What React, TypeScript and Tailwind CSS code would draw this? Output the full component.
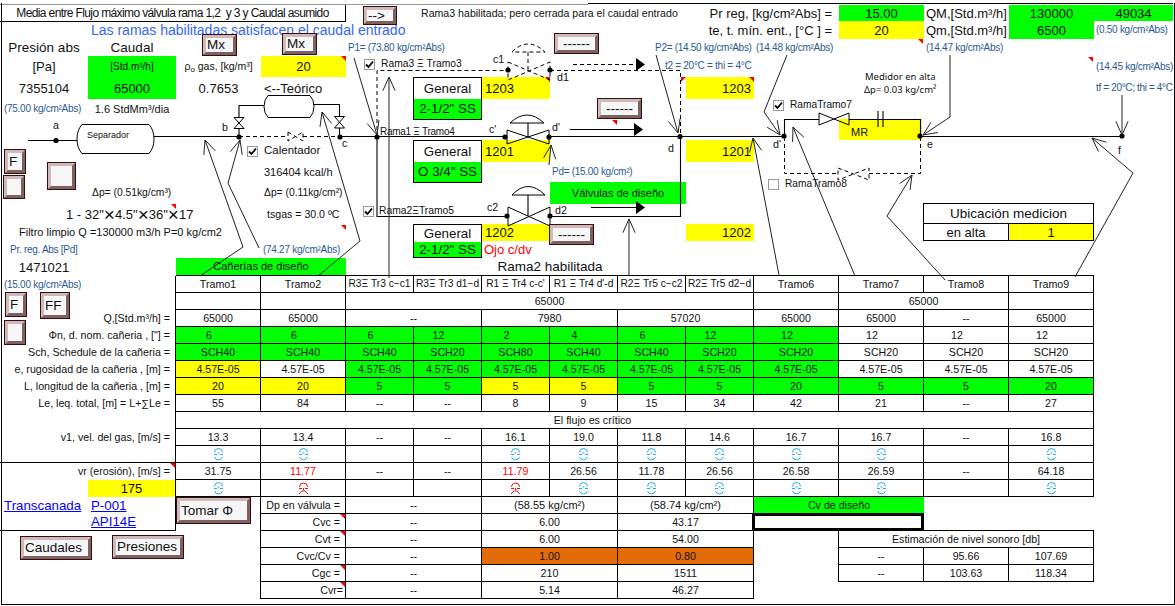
import type { ReactNode } from "react"

const G = "bg-[#00ff00]"
const Y = "bg-[#ffff00]"
const O = "bg-[#e36c09]"
const kg = "text-[#2a5a94] text-[10px] tracking-[-0.28px]"
const top = "flex items-center whitespace-nowrap"
const t13 = "text-[13px]"

function Corner() {
  return <i className="absolute top-0 right-0 border-t-[5px] border-l-[5px] border-t-[#ff0000] border-l-transparent" />
}

function Btn({ className, children, center }: { className: string; children?: ReactNode; center?: boolean }) {
  return (
    <div className={"absolute border border-[#3c0c0c] " + className}>
      <div
        className={
          "h-full border-[3px] border-t-[#cdbaba] border-l-[#cdbaba] border-b-[#7d6262] border-r-[#7d6262] bg-[#f6f6f6] flex items-center text-[13.5px] leading-none font-normal text-[#111] whitespace-nowrap " +
          (center ? "justify-center" : "justify-start pl-px")
        }
      >
        {children}
      </div>
    </div>
  )
}

function Check({ on = true }: { on?: boolean }) {
  return (
    <span className="inline-flex w-[11px] h-[11px] border border-[#999] bg-white shrink-0">
      {on && (
        <svg viewBox="0 0 9 9" className="w-[9px] h-[9px]">
          <path d="M1 4.5 L3.5 7 L8 1.5" fill="none" stroke="#000" strokeWidth="1.8" />
        </svg>
      )}
    </span>
  )
}

// the little face the sheet prints under the velocities
function Face({ sad = false }: { sad?: boolean }) {
  const c = sad ? "#f01010" : "#2aa8ee"
  return (
    <svg width="11" height="13" viewBox="0 0 11 13" fill="none" stroke={c} strokeWidth="1">
      {sad ? (
        <>
          <path d="M1.5 5 A4 4 0 0 1 9.5 5" />
          <path d="M1 6.5 H4 M7 6.5 H10" />
          <path d="M5.5 6 V8 M1 12 L4 9 H7 L10 12" />
        </>
      ) : (
        <>
          <path d="M1.5 4.5 A4 4 0 0 1 9.5 4.5" />
          <path d="M1 6.5 H4 M7 6.5 H10 M4.5 5 H6.5" />
          <path d="M1.5 9 A4.2 4.2 0 0 0 9.5 9" />
        </>
      )}
    </svg>
  )
}

type Cell = { t?: ReactNode; c?: string; corner?: boolean }
const td = (t: ReactNode, c = ""): Cell => ({ t, c: "border-r border-b border-black justify-center " + c })
const lab = (t: ReactNode, c = "", corner = false): Cell => ({
  t,
  c: "col-span-2 justify-end pr-[5px] border-r border-black " + c,
  corner,
})
const many = (vals: ReactNode[], bgs: string[] = [], c = "") => vals.map((v, i) => td(v, (bgs[i] || "") + " " + c))
const S = <Face />
const X = <Face sad />
const red = (t: string) => <span className="text-[#ff0000]">{t}</span>
const link = (t: string) => <a className="text-[13.3px] text-[#0000ff] underline">{t}</a>
const dl = (t: ReactNode, corner = false): Cell => ({
  t,
  c: "border-r border-b border-black justify-end pr-[5px]",
  corner,
})
const sp2 = "col-span-2"

const rows: Cell[][] = [
  [
    { t: "1471021", c: "justify-center " + t13 },
    {},
    { t: "Cañerías de diseño", c: "col-span-2 justify-center border-b border-black bg-[#00ff00] text-[11px]" },
    { c: "border-b border-black" },
    { c: "border-b border-black" },
    { t: "Rama2 habilitada", c: "col-span-2 justify-center border-b border-black text-[13.5px]" },
    { c: "border-b border-black" },
    { c: "border-b border-black" },
    { c: "border-b border-black" },
    { c: "border-b border-black" },
    { c: "border-b border-black" },
    { c: "border-b border-black" },
  ],
  [
    { t: "(15.00 kg/cm²Abs)", c: "col-span-2 pl-[4px] border-r border-black " + kg },
    td("Tramo1"),
    td("Tramo2"),
    ...many(
      ["R3Ξ Tr3 c−c1", "R3Ξ Tr3 d1−d", "R1 Ξ Tr4 c-c'", "R1 Ξ Tr4 d'-d", "R2Ξ Tr5 c−c2", "R2Ξ Tr5 d2−d"],
      [],
      "text-[10.2px]"
    ),
    td("Tramo6"),
    td("Tramo7"),
    td("Tramo8"),
    td("Tramo9"),
  ],
  [lab(""), td(""), td(""), td("65000", "col-span-6"), td(""), td("65000", sp2), td("")],
  [
    lab("Q,[Std.m³/h] ="),
    td("65000"),
    td("65000"),
    td("--", sp2),
    td("7980", sp2),
    td("57020", sp2),
    td("65000"),
    td("65000"),
    td("--"),
    td("65000"),
  ],
  [
    lab('Φn, d. nom. cañeria , ["] ='),
    ...many(
      ["6", "6", "6", "12", "2", "4", "6", "12", "12", "12", "12", "12"],
      [G, G, G, G, G, G, G, G, G],
      "pr-[18px]"
    ),
  ],
  [
    lab("Sch, Schedule de la cañeria ="),
    ...many(
      ["SCH40", "SCH40", "SCH40", "SCH20", "SCH80", "SCH40", "SCH40", "SCH20", "SCH20", "SCH20", "SCH20", "SCH20"],
      [G, G, G, G, G, G, G, G, G]
    ),
  ],
  [lab("e, rugosidad de la cañeria , [m] ="), ...many(Array(12).fill("4.57E-05"), [Y, "", G, G, G, G, G, G, G])],
  [
    lab("L, longitud de la cañeria , [m] ="),
    ...many(
      ["20", "20", "5", "5", "5", "5", "5", "5", "20", "5", "5", "20"],
      [Y, Y, G, G, Y, Y, G, G, G, G, G, G]
    ),
  ],
  [
    lab("Le, leq. total, [m] = L+∑Le ="),
    ...many(["55", "84", "--", "--", "8", "9", "15", "34", "42", "21", "--", "27"]),
  ],
  [lab(""), td("El flujo es crítico", "col-span-12 pr-[84px]")],
  [
    lab("v1, vel. del gas, [m/s] ="),
    ...many(["13.3", "13.4", "--", "--", "16.1", "19.0", "11.8", "14.6", "16.7", "16.7", "--", "16.8"]),
  ],
  [lab("", "border-b"), ...many([S, S, "", "", S, S, S, S, S, S, "", S])],
  [
    lab("vr (erosión), [m/s] =", "", true),
    ...many([
      "31.75",
      red("11.77"),
      "--",
      "--",
      red("11.79"),
      "26.56",
      "11.78",
      "26.56",
      "26.58",
      "26.59",
      "--",
      "64.18",
    ]),
  ],
  [
    {},
    { t: "175", c: "justify-center border-r border-black text-[13px] " + Y },
    ...many([S, X, "", "", X, S, S, S, S, S, "", S]),
  ],
  [
    { t: link("Transcanada"), c: "pl-[4px]" },
    { t: link("P-001"), c: "pl-[3px] border-r border-black" },
    { c: "border-r border-black" },
    dl("Dp en válvula ="),
    td("--", sp2),
    td(<span className="text-[11px]">(58.55 kg/cm²)</span>, sp2),
    td(<span className="text-[11px]">(58.74 kg/cm²)</span>, sp2),
    { t: "Cv de diseño", c: "col-span-2 justify-center bg-[#00ff00]" },
    {},
    {},
  ],
  [
    { c: "border-b border-black" },
    { t: link("API14E"), c: "pl-[3px] border-r border-b border-black" },
    { c: "border-r border-black" },
    dl("Cvc =", true),
    td("--", sp2),
    td("6.00", sp2),
    td("43.17", sp2),
    { c: "col-span-2 border-[3px] border-black -ml-[2px] -mt-[1px]" },
    { c: "border-b border-black" },
    { c: "border-b border-black" },
  ],
  [
    { c: "col-span-3 border-r border-black" },
    dl("Cvt =", true),
    td("--", sp2),
    td("6.00", sp2),
    td("54.00", sp2),
    { c: "border-r border-black" },
    td("Estimación de nivel sonoro [db]", "col-span-3"),
  ],
  [
    { c: "col-span-3 border-r border-black" },
    dl("Cvc/Cv ="),
    td("--", sp2),
    td("1.00", "col-span-2 " + O),
    td("0.80", "col-span-2 " + O),
    { c: "border-r border-black" },
    td("--"),
    td("95.66"),
    td("107.69"),
  ],
  [
    { c: "col-span-3 border-r border-black" },
    dl("Cgc =", true),
    td("--", sp2),
    td("210", sp2),
    td("1511", sp2),
    { c: "border-r border-black" },
    td("--"),
    td("103.63"),
    td("118.34"),
  ],
  [
    { c: "col-span-3 border-r border-black" },
    { t: "Cvr=", c: "border-r border-b border-black justify-end pr-[2px]", corner: true },
    td("--", sp2),
    td("5.14", sp2),
    td("46.27", sp2),
    { c: "col-span-4" },
  ],
]

// open V arrow head on a leader line
function Head({ x, y, fx, fy }: { x: number; y: number; fx: number; fy: number }) {
  const a = Math.atan2(fy - y, fx - x)
  const p = (d: number) => `${x + 15 * Math.cos(a + d)} ${y + 15 * Math.sin(a + d)}`
  return <path d={`M${p(0.42)} L${x} ${y} L${p(-0.42)}`} fill="none" stroke="#222" />
}

function Bow({ d, dashed }: { d: string; dashed?: boolean }) {
  return <path d={d} fill="none" stroke="#000" strokeDasharray={dashed ? "4 3" : undefined} />
}

function Node({ x, y }: { x: number; y: number }) {
  return <circle cx={x} cy={y} r="2.6" fill="#000" />
}

function Diagram() {
  const dash = "4 3"
  return (
    <svg className="absolute inset-0 pointer-events-none" width="1175" height="606" fill="none">
      {/* main line */}
      <g stroke="#000" strokeWidth="1.1">
        <path d="M28 140.5 H77 M154 136.5 H239 M340 136.5 H505 M549 136.5 H784 M920 136.5 H1122" />
        <path d="M239 136.5 V128 M239 117 V105.5 H264 M314 104.5 H339.5 V116 M339.5 128 V136" />
        <path d="M377 136.5 V216.5 H507 M550 216.5 H680.5 V137" />
        <path d="M784.5 136 V119.5 H819 M849 119.5 H920.5 V136" />
        <path d="M878 111 V127 M883 111 V127" />
        <path d="M528 123 V137 M528 195 V216" />
      </g>
      <g stroke="#000" strokeDasharray={dash}>
        <path d="M239 136.5 H288 M303 136.5 H340" />
        <path d="M377 137 V70.5 H508 M550 70.5 H680.5 V137" />
        <path d="M784.5 137 V173.5 H838 M869 173.5 H920.5 V137" />
        <path d="M528 52 V70" />
        <path d="M512 52 Q528 36 545 52 Z" />
        <path d="M573 64.5 H636" />
      </g>
      {/* vessels */}
      <path d="M82 124.5 H149 Q154 130 154 139 Q154 148 149 153.5 H82 Q77 148 77 139 Q77 130 82 124.5 Z" fill="#fff" stroke="#000" />
      <path d="M268 95.5 H310 Q314 100 314 106.5 Q314 113 310 117.5 H268 Q264 113 264 106.5 Q264 100 268 95.5 Z" fill="#fff" stroke="#000" />
      {/* valves */}
      <Bow d="M234 117.5 H244 L234 128.5 H244 Z" />
      <Bow d="M334.5 116.5 H344.5 L334.5 128 H344.5 Z" />
      <Bow d="M288 132 L303 141 V132 L288 141 Z" dashed />
      <Bow d="M507 130 L549 144 V130 L507 144 Z" />
      <path d="M510 123 Q527 107 544 123 Z" fill="#fff" stroke="#000" />
      <Bow d="M508 62 L550 80 V62 L508 80 Z" dashed />
      <Bow d="M508 207 L550 226 V207 L508 226 Z" />
      <path d="M512 195 Q528 178 545 195 Z" fill="#fff" stroke="#000" />
      <Bow d="M819 113 L849 125 V113 L819 125 Z" />
      <Bow d="M838 168 L869 180 V168 L838 180 Z" dashed />
      {/* flow arrows */}
      <path d="M570 129.5 H636 M591 207.5 H636" stroke="#000" />
      <path d="M636 58 L645 64.5 L636 71 Z M634 123 L643 129.5 L634 136 Z M636 201 L645 207.5 L636 214 Z" fill="#000" />
      {/* nodes */}
      <Node x={56} y={140.5} />
      <Node x={239} y={137} />
      <Node x={340} y={137} />
      <Node x={377} y={137} />
      <Node x={505} y={137} />
      <Node x={549} y={137} />
      <Node x={680} y={136.5} />
      <Node x={508} y={70} />
      <Node x={550} y={70} />
      <Node x={507} y={216} />
      <Node x={550} y={216} />
      <Node x={784} y={136} />
      <Node x={920} y={136} />
      <Node x={1122} y={136} />
      {/* leader lines */}
      <g stroke="#222">
        <path d="M200 276 L243 247 L205 140" />
        <path d="M318 276 L360 241 L322 112" />
        <path d="M259 248 L228 183 L240 140" />
        <path d="M354 58 L377 135" />
        <path d="M389 77 V278" />
        <path d="M629 219 V275" />
        <path d="M656 55 L678 133" />
        <path d="M779 275 L753 138" />
        <path d="M787 55 L764 112 L780 135" />
        <path d="M855 276 L793 127" />
        <path d="M945 280 L887 216 L912 175" />
        <path d="M1075 277 L1133 173 L1092 138" />
        <path d="M950 55 V117 L923 135" />
        <path d="M1122 95 V135" />
        <path d="M549 165 L551 145" />
      </g>
      <Head x={205} y={140} fx={243} fy={247} />
      <Head x={322} y={112} fx={360} fy={241} />
      <Head x={240} y={140} fx={228} fy={183} />
      <Head x={377} y={135} fx={354} fy={58} />
      <Head x={389} y={77} fx={389} fy={278} />
      <Head x={629} y={219} fx={629} fy={275} />
      <Head x={678} y={133} fx={656} fy={55} />
      <Head x={753} y={138} fx={779} fy={275} />
      <Head x={780} y={135} fx={764} fy={112} />
      <Head x={793} y={127} fx={855} fy={276} />
      <Head x={912} y={175} fx={887} fy={216} />
      <Head x={1092} y={138} fx={1133} fy={173} />
      <Head x={923} y={135} fx={950} fy={117} />
      <Head x={1122} y={135} fx={1122} fy={95} />
      <Head x={551} y={145} fx={549} fy={165} />
    </svg>
  )
}

const tag = "absolute whitespace-nowrap leading-[12px]"
const times = <span className="text-[19px] font-light leading-none">×</span>

export default function App() {
  return (
    <div className="relative w-[1175px] h-[606px] overflow-hidden bg-white text-[10.67px] leading-none text-[#111] font-['Liberation_Sans',Arial,sans-serif]">
      {/* process diagram part of the sheet */}
      <div className="grid grid-cols-[88px_88px_85px_85px_68px_68px_68px_68px_68px_68px_85px_85px_85px_85px_79px] grid-rows-[5px_16px_18px_17px_21px_22px_20px_21px_22px_20px_22px_20px_17px_17px]">
        <div className="col-span-15 row-start-1 flex items-end">
          <div className="w-[588px] border-b border-[#999]" />
          <div className="flex-1 border-b border-black mb-[1px]" />
        </div>

        <div className={top + " col-start-1 col-span-4 row-start-2 h-[17px] justify-center border-b border-r border-black text-[12px] tracking-[-0.62px]"}>
          Media entre Flujo máximo válvula rama 1,2&nbsp; y 3 y Caudal asumido
        </div>
        <div className={top + " col-start-6 col-span-5 row-start-2 pl-[7px] text-[10.6px]"}>
          Rama3 habilitada; pero cerrada para el caudal entrado
        </div>
        <div className={top + " col-start-10 col-span-2 row-start-2 justify-end pr-[7px] " + t13}>Pr reg, [kg/cm²Abs] =</div>
        <div className={top + " col-start-12 row-start-2 justify-center " + t13 + " " + G}>15.00</div>
        <div className={top + " col-start-13 row-start-2 pl-[2px] " + t13}>QM,[Std.m³/h]</div>
        <div className={top + " col-start-14 row-start-2 justify-center " + t13 + " " + G}>130000</div>
        <div className={top + " col-start-15 row-start-2 justify-center " + t13 + " " + G}>49034</div>

        <div className={top + " col-start-2 col-span-4 row-start-3 pl-[3px] text-[14px] text-[#3366ff]"}>
          Las ramas habilitadas satisfacen el caudal entrado
        </div>
        <div className={top + " col-start-10 col-span-2 row-start-3 justify-end pr-[7px] " + t13}>te, t. mín. ent., [°C ] =</div>
        <div className={top + " relative col-start-12 row-start-3 justify-center " + t13 + " " + Y}>20</div>
        <div className={top + " col-start-13 row-start-3 pl-[2px] " + t13}>Qm,[Std.m³/h]</div>
        <div className={top + " col-start-14 row-start-3 justify-center " + t13 + " " + G}>6500</div>
        <div className={top + " col-start-15 row-start-3 pl-[2px] " + kg}>(0.50 kg/cm²Abs)</div>

        <div className={top + " col-start-1 row-start-4 justify-center text-[13.5px]"}>Presión abs</div>
        <div className={top + " col-start-2 row-start-4 justify-center text-[13.5px]"}>Caudal</div>
        <div className={top + " col-start-5 row-start-4 pl-[2px] " + kg}>P1= (73.80 kg/cm²Abs)</div>
        <div className={top + " col-start-9 row-start-4 pl-[37px] " + kg}>P2= (14.50 kg/cm²Abs)</div>
        <div className={top + " col-start-11 row-start-4 pl-[2px] " + kg}>(14.48 kg/cm²Abs)</div>
        <div className={top + " col-start-13 row-start-4 pl-[2px] " + kg}>(14.47 kg/cm²Abs)</div>

        <div className={top + " col-start-1 row-start-5 justify-center " + t13}>[Pa]</div>
        <div className={top + " col-start-2 row-start-5 justify-center text-[10px] " + G}>[Std.m³/h]</div>
        <div className={top + " col-start-3 row-start-5 justify-center text-[10.5px]"}>
          <span>
            ρ<sub className="text-[8px]">o</sub> gas, [kg/m³]
          </span>
        </div>
        <div className={top + " relative col-start-4 row-start-5 justify-center " + t13 + " " + Y}>
          20
          <Corner />
        </div>
        <div className={top + " col-start-5 col-span-2 row-start-5 gap-[6px] pl-[18px] pb-[5px] text-[10.3px]"}>
          <Check /> <span>Rama3 Ξ Tramo3</span>
        </div>
        <div className={top + " col-start-9 row-start-5 pl-[47px] pb-[1px] " + kg}>t2 = 20°C = thi = 4°C</div>
        <div className={top + " col-start-15 row-start-5 pl-[2px] " + kg}>(14.45 kg/cm²Abs)</div>

        <div className={top + " col-start-1 row-start-6 justify-center " + t13}>7355104</div>
        <div className={top + " col-start-2 row-start-6 justify-center " + t13 + " " + G}>65000</div>
        <div className={top + " col-start-3 row-start-6 justify-center " + t13}>0.7653</div>
        <div className={top + " col-start-4 row-start-6 pl-[3px] " + t13}>&lt;--Teórico</div>
        <div className="col-start-6 row-start-6 row-span-2 -ml-px -mb-px flex flex-col border border-black text-[13.33px]">
          <div className="h-[21px] flex items-center justify-center">General</div>
          <div className={"flex-1 flex items-center justify-center " + G}>2-1/2" SS</div>
        </div>
        <div className={top + " relative col-start-7 row-start-6 pl-[3px] text-[13px] " + Y}>
          1203
          <Corner />
        </div>
        <div className={top + " relative col-start-10 row-start-6 justify-end pr-[3px] text-[13px] " + Y}>
          1203
          <Corner />
        </div>
        <div className={top + " col-start-15 row-start-6 pl-[2px] text-[#2a5a94] text-[10px] tracking-[-0.35px]"}>tf = 20°C; thi = 4°C</div>

        <div className={top + " col-start-1 row-start-7 pl-[4px] " + kg}>(75.00 kg/cm²Abs)</div>
        <div className={top + " col-start-2 row-start-7 justify-center text-[11px]"}>1.6 StdMm³/dia</div>
        <div className="col-start-12 row-start-8 w-[83px] bg-[#ffff00] flex items-center pl-[12px] pt-[6px] text-[11px]">MR</div>

        <div className="col-start-6 row-start-9 row-span-2 -ml-px -mb-px flex flex-col border border-black text-[13.33px]">
          <div className="h-[21px] flex items-center justify-center">General</div>
          <div className={"flex-1 flex items-center justify-center " + G}>O 3/4" SS</div>
        </div>
        <div className={top + " col-start-7 row-start-9 pl-[3px] text-[13px] " + Y}>1201</div>
        <div className={top + " col-start-10 row-start-9 justify-end pr-[3px] text-[13px] " + Y}>1201</div>
        <div className={top + " col-start-3 col-span-2 row-start-9 gap-[6px] pl-[71px] text-[11.5px]"}>
          <Check /> <span>Calentador</span>
        </div>

        <div className={top + " col-start-4 row-start-10 pl-[3px] text-[11px]"}>316404 kcal/h</div>
        <div className={top + " col-start-8 row-start-10 pl-[2px] " + kg}>Pd= (15.00 kg/cm²)</div>

        <div className={top + " col-start-2 row-start-11 pl-[4px] text-[10.3px]"}>Δp= (0.51kg/cm³)</div>
        <div className={top + " col-start-4 row-start-11 pl-[3px] text-[10.3px]"}>Δp= (0.11kg/cm²)</div>
        <div className={top + " col-start-8 col-span-2 row-start-11 justify-center text-[11px] " + G}>Válvulas de diseño</div>

        <div className={top + " relative col-span-2 col-start-1 row-start-12 pl-[66px] text-[13px]"}>
          <span className="flex items-center">
            1 - 32"{times}4.5"{times}36"{times}17
          </span>
          <Corner />
        </div>
        <div className={top + " relative col-start-4 row-start-12 pl-[6px] text-[10.6px]"}>
          tsgas = 30.0 ºC
          <i className="absolute top-[21px] right-0 border-t-[5px] border-l-[5px] border-t-[#ff0000] border-l-transparent" />
        </div>
        <div className={top + " col-start-5 col-span-2 row-start-12 gap-[5px] pl-[17px] pb-[5px] text-[10.3px]"}>
          <Check /> <span>Rama2ΞTramo5</span>
        </div>
        <div className="col-start-13 col-span-2 row-start-12 -ml-px -mt-px flex items-center justify-center border border-black text-[13.5px]">
          Ubicación medicion
        </div>

        <div className={top + " col-span-3 col-start-1 row-start-13 pl-[19px] text-[11px]"}>
          Filtro limpio Q =130000 m3/h P=0 kg/cm2
        </div>
        <div className="col-start-6 row-start-13 row-span-2 -ml-px flex flex-col border border-black text-[13.33px]">
          <div className="h-[17px] flex items-center justify-center">General</div>
          <div className={"flex-1 flex items-center justify-center " + G}>2-1/2" SS</div>
        </div>
        <div className={top + " col-start-7 row-start-13 pl-[3px] text-[13px] " + Y}>1202</div>
        <div className={top + " col-start-10 row-start-13 justify-end pr-[3px] text-[13px] " + Y}>1202</div>
        <div className="col-start-13 row-start-13 -ml-px flex items-center justify-center border-l border-b border-r border-black text-[13px]">
          en alta
        </div>
        <div className={"col-start-14 row-start-13 flex items-center justify-center border-b border-r border-black text-[13px] " + Y}>1</div>

        <div className={top + " col-start-1 row-start-14 pl-[10px] " + kg}>Pr. reg. Abs [Pd]</div>
        <div className={top + " col-start-4 row-start-14 pl-[2px] " + kg}>(74.27 kg/cm²Abs)</div>
        <div className={top + " col-start-7 row-start-14 pl-[2px] text-[13px] text-[#ff0000]"}>Ojo c/dv</div>
      </div>

      {/* table part */}
      <div className="grid grid-cols-[88px_88px_85px_85px_68px_68px_68px_68px_68px_68px_85px_85px_85px_85px] grid-rows-[18px_repeat(19,17px)]">
        {rows.flat().map((cell, i) => (
          <div key={i} className={"relative flex items-center whitespace-nowrap " + (cell.c || "")}>
            {cell.t}
            {cell.corner && <Corner />}
          </div>
        ))}
      </div>

      <Diagram />

      {/* diagram labels */}
      <span className={tag + " left-[53px] top-[119px]"}>a</span>
      <span className={tag + " left-[222px] top-[121px]"}>b</span>
      <span className={tag + " left-[342px] top-[137px]"}>c</span>
      <span className={tag + " left-[87px] top-[129px] text-[9px]"}>Separador</span>
      <span className={tag + " left-[493px] top-[53px]"}>c1</span>
      <span className={tag + " left-[557px] top-[71px]"}>d1</span>
      <span className={tag + " left-[489px] top-[123px]"}>c'</span>
      <span className={tag + " left-[552px] top-[121px]"}>d'</span>
      <span className={tag + " left-[487px] top-[201px]"}>c2</span>
      <span className={tag + " left-[555px] top-[204px]"}>d2</span>
      <span className={tag + " left-[668px] top-[142px]"}>d</span>
      <span className={tag + " left-[773px] top-[138px]"}>d'</span>
      <span className={tag + " left-[927px] top-[138px]"}>e</span>
      <span className={tag + " left-[1118px] top-[144px]"}>f</span>
      <span className={tag + " left-[380px] top-[126px] text-[10px] tracking-[-0.28px]"}>Rama1 Ξ Tramo4</span>
      <span className={tag + " left-[865px] top-[71px] text-[9.5px] font-['Noto_Sans']"}>Medidor en alta</span>
      <span className={tag + " left-[864px] top-[84px] text-[9.5px] font-['Noto_Sans']"}>Δp= 0.03 kg/cm²</span>
      <span className={tag + " left-[773px] top-[99px] flex items-center gap-[6px] text-[10.2px]"}>
        <Check /> RamaTramo7
      </span>
      <span className={tag + " left-[768px] top-[178px] flex items-center gap-[6px] text-[10.2px]"}>
        <Check on={false} /> RamaTramo8
      </span>
      <i className="absolute left-[918px] top-[39px] border-t-[5px] border-l-[5px] border-t-[#ff0000] border-l-transparent" />
      <i className="absolute left-[1088px] top-[57px] border-t-[5px] border-l-[5px] border-t-[#ff0000] border-l-transparent" />
      <i className="absolute left-[612px] top-[120px] border-t-[5px] border-l-[5px] border-t-[#ff0000] border-l-transparent" />
      <i className="absolute left-[681px] top-[77px] border-t-[5px] border-r-[5px] border-t-[#ff0000] border-r-transparent" />

      {/* floating buttons */}
      <Btn className="left-[363px] top-[6px] w-[34px] h-[19px]">--&gt;</Btn>
      <Btn className="left-[202px] top-[34px] w-[35px] h-[22px]">Mx</Btn>
      <Btn className="left-[282px] top-[33px] w-[35px] h-[22px]">Mx</Btn>
      <Btn center className="left-[554px] top-[33px] w-[45px] h-[21px]">------</Btn>
      <Btn center className="left-[597px] top-[98px] w-[45px] h-[21px]">------</Btn>
      <Btn center className="left-[549px] top-[224px] w-[45px] h-[21px]">------</Btn>
      <Btn className="left-[4px] top-[149px] w-[22px] h-[25px]">F</Btn>
      <Btn className="left-[47px] top-[162px] w-[29px] h-[28px]" />
      <Btn className="left-[3px] top-[175px] w-[22px] h-[24px]" />
      <Btn className="left-[5px] top-[292px] w-[22px] h-[25px]">F</Btn>
      <Btn className="left-[40px] top-[292px] w-[30px] h-[27px]">FF</Btn>
      <Btn className="left-[4px] top-[320px] w-[22px] h-[25px]" />
      <Btn className="left-[176px] top-[497px] w-[75px] h-[27px]">Tomar Φ</Btn>
      <Btn className="left-[20px] top-[536px] w-[72px] h-[24px]">Caudales</Btn>
      <Btn className="left-[112px] top-[535px] w-[72px] h-[24px]">Presiones</Btn>

      {/* sheet frame */}
      <div className="absolute left-[1px] top-[3px] right-0 bottom-[1px] border-l border-r border-b border-black pointer-events-none" />
    </div>
  )
}
